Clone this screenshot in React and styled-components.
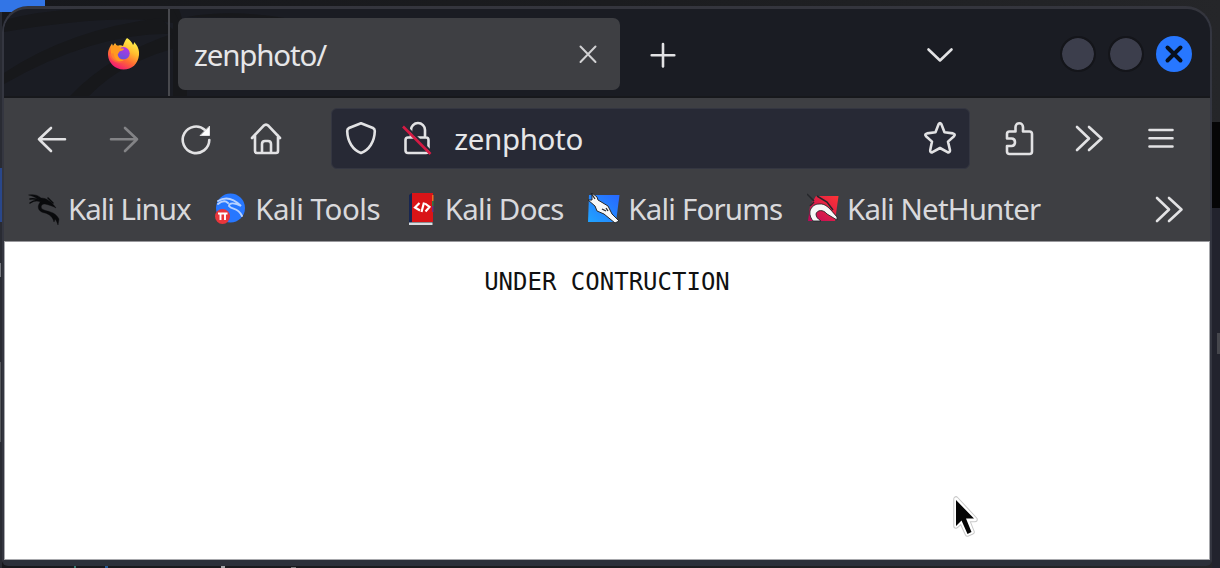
import React from "react";
import styled, { createGlobalStyle } from "styled-components";

const GlobalStyle = createGlobalStyle`
  * { box-sizing: border-box; }
  body { margin: 0; background: #1c1d20; overflow: hidden; }
`;

const Desktop = styled.div`
  position: relative;
  width: 1220px;
  height: 568px;
  padding: 6px 8px 2px 2px;
  overflow: hidden;
  background: linear-gradient(90deg, #17181c, #1b1c1f 50%, #252629);
  font-family: "Noto Sans", sans-serif;
`;

const Patch = styled.div`
  position: absolute;
  left: ${(p) => p.$x}px;
  top: ${(p) => p.$y}px;
  width: ${(p) => p.$w}px;
  height: ${(p) => p.$h}px;
  background: ${(p) => p.$color};
`;

const Window = styled.div`
  position: relative;
  display: flex;
  flex-direction: column;
  height: 560px;
  border: 2px solid #343640;
  border-top: 3px solid #34353d;
  border-bottom: 6px solid #2c303a;
  border-radius: 26px 26px 6px 6px;
  background: #2c303a;
`;

const TitleBar = styled.header`
  position: relative;
  display: flex;
  align-items: center;
  flex: 0 0 89px;
  background: #1a1c23;
  border-bottom: 2px solid #17181c;
  border-radius: 23px 23px 0 0;
  overflow: hidden;
`;

const Wallpaper = styled.svg`
  position: absolute;
  left: 0;
  top: 0;
`;

const PinnedTab = styled.div`
  position: relative;
  width: 166px;
  height: 100%;
  padding: 28px 0 0 103px;
  border-right: 2px solid #48494e;
`;

const Label = styled.span`
  padding-top: ${(p) => p.$drop || 0}px;
  font-size: 29.5px;
  line-height: 38px;
  letter-spacing: ${(p) => p.$tracking}px;
  white-space: nowrap;
`;

const Tab = styled.div`
  position: relative;
  display: flex;
  align-items: center;
  justify-content: space-between;
  width: 442px;
  height: 72px;
  margin: 3px 0 0 8px;
  padding: 0 16px;
  border-radius: 7px;
  background: #3e3f43;
  color: #e6e6e8;
`;

const TabActions = styled.div`
  display: flex;
  flex: 1;
  align-items: center;
  justify-content: space-between;
  padding: 4px 104px 0 27px;
`;

const WindowControls = styled.div`
  display: flex;
  align-items: center;
  gap: 12px;
  padding: 2px 18px 0 0;
`;

const RoundButton = styled.div`
  display: flex;
  align-items: center;
  justify-content: center;
  width: 36px;
  height: 36px;
  border-radius: 50%;
  background: ${(p) => (p.$close ? "#2777ff" : "#3c3e4c")};
  border: ${(p) => (p.$close ? "0" : "2px solid #14151a")};
  background-clip: padding-box;
`;

const NavBar = styled.nav`
  display: flex;
  align-items: center;
  flex: 0 0 80px;
  padding: 0 12px;
  background: #3e3f43;
`;

const Slot = styled.div`
  display: flex;
  justify-content: center;
  width: ${(p) => p.$w || 72}px;
  opacity: ${(p) => (p.$dim ? 0.42 : 1)};
`;

const AddressBar = styled.div`
  display: flex;
  align-items: center;
  width: 640px;
  height: 61px;
  margin: 0 13px 0 30px;
  padding: 0 13px;
  border: 1px solid #343641;
  border-radius: 6px;
  background: #272935;
  color: #e6e6e8;
`;

const Address = styled.div`
  display: flex;
  flex: 1;
  padding-left: 21px;
`;

const Spacer = styled.div`
  width: ${(p) => p.$w}px;
`;

const BookmarksBar = styled.div`
  display: flex;
  align-items: center;
  flex: 0 0 63px;
  gap: 24.6px;
  padding: 0 25px 1px 24px;
  background: #3e3f43;
`;

const Bookmark = styled.div`
  display: flex;
  align-items: center;
  gap: 8px;
  color: #d9d9dc;
`;

const Overflow = styled.div`
  display: flex;
  margin-left: auto;
`;

const Page = styled.main`
  flex: 1;
  border: 1px solid #a7a8ac;
  border-top-color: #98989c;
  background: #fff;
  color: #111;
  padding-top: 24px;
  font: 24px/32px "DejaVu Sans Mono", monospace;
  text-align: center;
`;

const Pointer = styled.svg`
  position: absolute;
  left: 948px;
  top: 490px;
`;

function Icon({ children, size = 32, width = 2.6, color = "#e2e2e4" }) {
  return (
    <svg width={size} height={size} viewBox={`0 0 ${size} ${size}`} fill="none" stroke={color}
      strokeWidth={width} strokeLinecap="round" strokeLinejoin="round" overflow="visible">
      {children}
    </svg>
  );
}

const DoubleChevron = () => (
  <Icon><path d="M4 5l12 11.500L4 28M16 5l12.500 11.500L16 28" /></Icon>
);

const Firefox = () => (
  <svg width="33" height="34" viewBox="0 0 33 34">
    <defs>
      <linearGradient id="flame" x1=".8" y1=".05" x2=".3" y2="1">
        <stop offset="0" stopColor="#fff44f" /><stop offset=".35" stopColor="#ffbd2e" />
        <stop offset=".65" stopColor="#ff6a32" /><stop offset="1" stopColor="#f0127a" />
      </linearGradient>
      <linearGradient id="globe" x1=".7" y1="0" x2=".3" y2="1">
        <stop offset="0" stopColor="#b833e1" /><stop offset="1" stopColor="#6054dc" />
      </linearGradient>
    </defs>
    <path fill="url(#flame)" d="M20 1C23 3 25 5 26 8C27 7 27 6 27 5C31 9 32.5 13 32 18C31 27 25 32.5 16.5 32.5C8 32.5 1.500 26 1 18C.8 13 3 10 5 6.500L6 9L8 6L10 9C13 8 14 8 16 9C17 6 18 3 20 1Z" />
    <circle cx="16.500" cy="16.300" r="6.200" fill="url(#globe)" />
    <path fill="#ff9a20" d="M4 10C8 7 12 8 14 11.500H17C17 13.500 14 14 12.500 14.500C11.500 16 11 17 10.500 17.500C11.500 22 14 23.500 18 22.500C12 27 5 23 4 17Z" />
    <path fill="#ff7139" opacity=".6" d="M2 17C4 25 10 27 17 25C10 25 7 21 6.500 16Z" />
  </svg>
);

const DRAGON = "M1 2C5 1 10 2 13 5C18 5 23 8 28 15C25 13 21 12 17 11C14 11 12 13 14 16C19 19 27 18 31 26L30 32C29 29 28 27 27 26L26 29C25 24 21 21 17 20C11 19 9 15 11 11C12 9 13 8 12 8C9 5 5 3 1 2Z";
const DRAGON_LINES = "M2 6C6 5 9 6 12 8M2 10C6 7 9 7 12 8M20 5L25 10";

const KaliLinux = () => (
  <Icon width={1.5} color="#090a0c"><path fill="#090a0c" strokeWidth=".4" d={DRAGON} /><path d={DRAGON_LINES} /></Icon>
);

const KaliTools = () => (
  <svg width="32" height="32" viewBox="0 0 32 32">
    <circle cx="15.500" cy="15" r="14.500" fill="#2777ff" />
    <path d="M3 8C11 3 19 6 26 13C19 9 14 10 14 13C17 17 23 14 27 23M3 11C8 7 11 8 13 10" fill="none" stroke="#b9d2ff" strokeWidth="1.900" strokeLinecap="round" />
    <circle cx="7.500" cy="23.500" r="7.500" fill="#e9363b" />
    <path d="M3 20.500H12.500M5.500 20.500V27M10 20.500V27" fill="none" stroke="#fff" strokeWidth="1.900" />
  </svg>
);

const KaliDocs = () => (
  <svg width="32" height="32" viewBox="0 0 32 32">
    <path fill="#182650" d="M4 2L7 0V29L4 31Z" />
    <path fill="#d7dce0" d="M4 29.500H27.500V32H4Z" />
    <path fill="#d91417" d="M7 0H28V29H7Z" />
    <path fill="#f06b22" d="M27 2h1.500v6H27z" /><path fill="#367842" d="M27 8h1.500v5H27z" /><path fill="#702b82" d="M27 13h1.500v6H27z" />
    <path d="M14.500 10L10 14.500L15 17.500M19 9.500L16.500 19M20 10.500L24.500 14L20.500 18.500" fill="none" stroke="#fff" strokeWidth="2.200" />
  </svg>
);

const KaliForums = () => (
  <svg width="32" height="32" viewBox="0 0 32 32">
    <defs><linearGradient id="forum" x1="0" y1="1" x2="1" y2="0"><stop stopColor="#20a4ff" /><stop offset="1" stopColor="#2867ff" /></linearGradient></defs>
    <path fill="url(#forum)" d="M1 2H31.500L28 29H0Z" />
    <path fill="#f7f7f7" stroke="#25272b" strokeWidth="1" d="M4 0L9 4L10 7L20 13L24 21L31 28L27 30L16 21L9 18L7 13L0 7L4 7Z" />
    <path stroke="#25272b" strokeWidth="1.300" fill="none" d="M3 0L7 6M14 16L18 18M18 15L20 18" />
  </svg>
);

const KaliNetHunter = () => (
  <svg width="32" height="32" viewBox="0 0 32 32">
    <defs><linearGradient id="hunter" x1="0" y1="1" x2="1" y2="0"><stop stopColor="#bd075b" /><stop offset="1" stopColor="#ff3434" /></linearGradient></defs>
    <path fill="url(#hunter)" d="M9 3H31.500L28 28H1L3 13Z" />
    <path stroke="#25272b" strokeWidth="1.500" fill="none" d="M0 1L7 8M10 3L20 9L26 17M3 13L7 9" />
    <path fill="#f7f7f7" stroke="#25272b" strokeWidth=".9" d="M6 28C-1 19 5 11 12 11C19 10 23 16 30 24V27L20 21C16 16 10 17 9 21C9 24 11 26 14 28Z" />
  </svg>
);

const bookmarks = [
  ["Kali Linux", KaliLinux, -1.03], ["Kali Tools", KaliTools, -0.45], ["Kali Docs", KaliDocs, -0.72],
  ["Kali Forums", KaliForums, -0.8], ["Kali NetHunter", KaliNetHunter, -0.84],
];

const POINTER_OUTLINE = "M1 2V29L6.500 24L12.500 37L17 35L12 22.500H20Z";

export default function App() {
  return (
    <Desktop>
      <GlobalStyle />
      <Patch $x={0} $y={0} $w={45} $h={12} $color="#3275e6" />
      <Patch $x={0} $y={12} $w={2} $h={556} $color="#292b33" />
      <Patch $x={0} $y={168} $w={2} $h={54} $color="#29478b" />
      <Patch $x={0} $y={263} $w={1} $h={14} $color="#777980" />
      <Patch $x={0} $y={362} $w={1} $h={80} $color="#56585d" />
      <Patch $x={1212} $y={122} $w={8} $h={86} $color="#050506" />
      <Patch $x={1212} $y={208} $w={8} $h={360} $color="#22232d" />
      <Patch $x={1217} $y={333} $w={3} $h={21} $color="#45464c" />
      <Patch $x={74} $y={566} $w={2} $h={2} $color="#397a72" />
      <Patch $x={105} $y={566} $w={3} $h={2} $color="#285993" />
      <Patch $x={221} $y={566} $w={4} $h={2} $color="#a4a5a8" />
      <Patch $x={291} $y={567} $w={5} $h={1} $color="#77787b" />
      <Window>
        <TitleBar>
          <Wallpaper width="330" height="87" fill="#17181b">
            <path d="M0 11Q34 2 76 0H175L180 16Q119 2 0 23Z" />
            <path d="M0 64Q66 20 156 9L174 25Q93 22 0 75Z" />
            <path d="M66 87Q107 44 174 23L183 36Q119 51 85 87Z" />
            <path d="M169 0L183 27V87H169ZM183 8Q225 0 281 9Z" />
          </Wallpaper>
          <PinnedTab><Firefox /></PinnedTab>
          <Tab>
            <Label $tracking={-1.15} $drop={2}>zenphoto/</Label>
            <Icon color="#d1d1d3" width={2}><path d="M8.500 8.500L23.500 24M23.500 8.500L8.500 24" /></Icon>
          </Tab>
          <TabActions>
            <Icon><path d="M16 5V27.500M4.700 16.200H27.300" /></Icon>
            <Icon><path d="M4.500 10.500L16 21.500L27.500 10.500" /></Icon>
          </TabActions>
          <WindowControls>
            <RoundButton />
            <RoundButton />
            <RoundButton $close><Icon color="#07101f" width={4}><path d="M9.500 9.500L22.500 22.500M22.500 9.500L9.500 22.500" /></Icon></RoundButton>
          </WindowControls>
        </TitleBar>
        <NavBar>
          <Slot><Icon><path d="M29 17.300H3M15 6L3 17.300L15 29" /></Icon></Slot>
          <Slot $dim><Icon><path d="M3 17.300H29M17 6L29 17.300L17 29" /></Icon></Slot>
          <Slot>
            <Icon>
              <path d="M29.300 18A13.300 13.300 0 1 1 25 8" />
              <path d="M29.500 4.500V13.500H20.500Z" fill="#fff" strokeWidth="1" />
            </Icon>
          </Slot>
          <Slot $w={70}>
            <Icon><path d="M2 16L13.500 3.800Q16 1.500 18.500 3.800L30 16M5 13.500V29Q5 31 7 31H26Q28 31 28 29V13.500M12 31V22Q12 19 15 19H18Q21 19 21 22V31" /></Icon>
          </Slot>
          <AddressBar>
            <Icon><path d="M16 1.200L28 6Q29.800 7 29.800 9C29.500 20 24 28 16 31C8 28 2.500 20 2.200 9Q2.200 7 4 6Z" /></Icon>
            <Spacer $w={24} />
            <Icon>
              <path d="M10 15V8A7 7 0 0 1 24 8V15M7 15.500H25Q27.500 15.500 27.500 18V28.500Q27.500 31 25 31H7Q4.500 31 4.500 28.500V18Q4.500 15.500 7 15.500Z" />
              <path d="M7 6.500L30 29.500" stroke="#272935" strokeWidth="2.400" />
              <path d="M2 4.500L29.500 32" stroke="#d51a43" strokeWidth="2.600" strokeLinecap="butt" />
            </Icon>
            <Address><Label $tracking={-0.35} $drop={2}>zenphoto</Label></Address>
            <Icon><path d="M14.600 2.300Q16 0 17.400 2.300L20.500 10.200L29 11.400Q31.800 12 30 14.200L24 19.600L26 28.200Q26 31 23.500 30.200L16 26L8.500 30.200Q6 31 6.200 28.200L8 19.600L2 14.200Q.2 12 3 11.400L11.500 10.200Z" /></Icon>
          </AddressBar>
          <Slot>
            <Icon><path d="M12.500 9.500V5A3.700 3.700 0 0 1 20 5V9.500H26.500Q29 9.500 29 12V29.500Q29 32 26.500 32H6.500Q4 32 4 29.500V24H8.500Q12 24 12 20.300Q12 16.500 8.500 16.500H4V12Q4 9.500 6.500 9.500Z" /></Icon>
          </Slot>
          <Slot $w={69}><DoubleChevron /></Slot>
          <Slot $w={75}><Icon><path d="M4.500 8H27.500M4.500 16.200H27.500M4.500 24.500H27.500" /></Icon></Slot>
        </NavBar>
        <BookmarksBar>
          {bookmarks.map(([name, Mark, tracking]) => (
            <Bookmark key={name}><Mark /><Label $tracking={tracking}>{name}</Label></Bookmark>
          ))}
          <Overflow><DoubleChevron /></Overflow>
        </BookmarksBar>
        <Page>UNDER CONTRUCTION</Page>
      </Window>
      <Pointer width="38" height="54">
        <g transform="translate(7 7)" strokeLinejoin="round">
          <path d={POINTER_OUTLINE} fill="none" stroke="#777" strokeOpacity=".4" strokeWidth="5.500" />
          <path d={POINTER_OUTLINE} fill="#fff" stroke="#fff" strokeWidth="3.500" />
          <path d="M1 3V29L6.500 23.500L12.500 37L16.500 35L11 21.500H19Z" fill="#050505" />
        </g>
      </Pointer>
    </Desktop>
  );
}
